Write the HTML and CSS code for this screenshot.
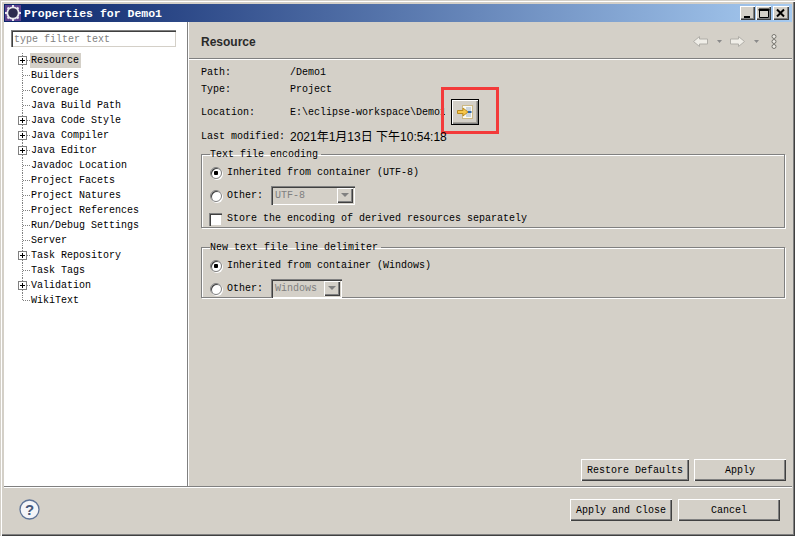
FILE: index.html
```html
<!DOCTYPE html>
<html lang="en">
<head>
<meta charset="utf-8">
<title>Properties for Demo1</title>
<link rel="stylesheet" href="styles.css">
</head>
<body>
<div class="window">
  <header class="titlebar">
    <svg class="app-icon" width="16" height="16" viewBox="0 0 16 16"><rect width="16" height="16" fill="#5b3f8c"/><circle cx="8" cy="8" r="6.6" fill="#e8e8ee"/><g stroke="#e8e8ee" stroke-width="2"><path d="M8 0v16M0 8h16M2.5 2.5l11 11M13.5 2.5l-11 11"/></g><circle cx="8" cy="8" r="4.8" fill="#2c2a4e"/></svg>
    <span class="title-text">Properties for Demo1</span>
    <div class="win-buttons">
      <button class="win-btn"><svg width="14" height="11" viewBox="0 0 14 11"><rect x="3" y="8" width="6" height="2" fill="#000"/></svg></button>
      <button class="win-btn win-btn-max"><svg width="14" height="11" viewBox="0 0 14 11"><path d="M2.5 1.5h9v8h-9z M2 1h10v1.5H2z" fill="none" stroke="#000"/></svg></button>
      <button class="win-btn win-btn-close"><svg width="14" height="11" viewBox="0 0 14 11"><path d="M3 1.5l7 7M10 1.5l-7 7" stroke="#000" stroke-width="2" fill="none"/></svg></button>
    </div>
  </header>

  <div class="main">
    <aside class="sidebar">
      <input class="filter" type="text" placeholder="type filter text">
      <ul class="tree">
        <li class="node"><i class="plus"></i><span class="label selected">Resource</span></li>
        <li class="node"><span class="label">Builders</span></li>
        <li class="node"><span class="label">Coverage</span></li>
        <li class="node"><span class="label">Java Build Path</span></li>
        <li class="node"><i class="plus"></i><span class="label">Java Code Style</span></li>
        <li class="node"><i class="plus"></i><span class="label">Java Compiler</span></li>
        <li class="node"><i class="plus"></i><span class="label">Java Editor</span></li>
        <li class="node"><span class="label">Javadoc Location</span></li>
        <li class="node"><span class="label">Project Facets</span></li>
        <li class="node"><span class="label">Project Natures</span></li>
        <li class="node"><span class="label">Project References</span></li>
        <li class="node"><span class="label">Run/Debug Settings</span></li>
        <li class="node"><span class="label">Server</span></li>
        <li class="node"><i class="plus"></i><span class="label">Task Repository</span></li>
        <li class="node"><span class="label">Task Tags</span></li>
        <li class="node"><i class="plus"></i><span class="label">Validation</span></li>
        <li class="node last"><span class="label">WikiText</span></li>
      </ul>
    </aside>

    <section class="content">
      <div class="page-head">
        <h1 class="page-title">Resource</h1>
        <div class="nav-tools">
          <svg class="nav-arrow" width="15" height="11" viewBox="0 0 15 11"><path d="M.5 5.500L6.500.5V3h8v5h-8v2.500z" fill="#f0eee8" stroke="#b0aea8"/></svg>
          <svg class="nav-drop" width="5" height="3" viewBox="0 0 5 3"><path d="M0 0h5L2.5 3z" fill="#8a8a8a"/></svg>
          <svg class="nav-arrow" width="15" height="11" viewBox="0 0 15 11"><path d="M14.500 5.500L8.500.5V3h-8v5h8v2.500z" fill="#f0eee8" stroke="#b0aea8"/></svg>
          <svg class="nav-drop" width="5" height="3" viewBox="0 0 5 3"><path d="M0 0h5L2.5 3z" fill="#8a8a8a"/></svg>
          <svg class="nav-more" width="6" height="15" viewBox="0 0 6 15"><g fill="#eeece6" stroke="#77756f"><circle cx="3" cy="2.5" r="2"/><circle cx="3" cy="7.5" r="2"/><circle cx="3" cy="12.5" r="2"/></g></svg>
        </div>
      </div>
      <div class="page-body">
        <div class="info-row info-path"><span class="info-key">Path:</span><span>/Demo1</span></div>
        <div class="info-row info-type"><span class="info-key">Type:</span><span>Project</span></div>
        <div class="info-row info-location">
          <span class="info-key">Location:</span>
          <span class="location-path">E:\eclipse-workspace\Demo1</span>
          <button class="reveal">
            <svg width="16" height="16" viewBox="0 0 16 16"><rect x="5.5" y="1.5" width="10" height="13" fill="#fafaf4" stroke="#cdb985"/><path d="M9 4h5M9 6h5M9 10h5M9 12h5" stroke="#9ab0c8"/><rect x="11" y="7" width="3.500" height="2" fill="#2f66a8"/><path d="M.5 6.500h5.500V4l5 4-5 4V9.500H.5z" fill="#f6c64a" stroke="#b98a1e"/></svg>
          </button>
          <span class="annotation"></span>
        </div>
        <div class="info-row info-modified"><span class="info-key">Last modified:</span><span class="date">2021年1月13日 下午10:54:18</span></div>

        <fieldset class="group group-encoding">
          <legend class="group-title">Text file encoding</legend>
          <div class="option option-first"><i class="radio checked"></i><span>Inherited from container (UTF-8)</span></div>
          <div class="option option-other"><i class="radio"></i><span class="other-label">Other:</span><span class="combo combo-wide"><span class="combo-text">UTF-8</span><i class="combo-arrow"></i></span></div>
          <div class="option option-check"><i class="check"></i><span>Store the encoding of derived resources separately</span></div>
        </fieldset>

        <fieldset class="group group-delimiter">
          <legend class="group-title">New text file line delimiter</legend>
          <div class="option option-first"><i class="radio checked"></i><span>Inherited from container (Windows)</span></div>
          <div class="option option-other"><i class="radio"></i><span class="other-label">Other:</span><span class="combo combo-narrow"><span class="combo-text">Windows</span><i class="combo-arrow"></i></span></div>
        </fieldset>
      </div>
      <div class="page-actions">
        <button class="btn btn-restore">Restore Defaults</button>
        <button class="btn btn-apply">Apply</button>
      </div>
    </section>
  </div>

  <footer class="footer">
    <svg class="help" width="21" height="21" viewBox="0 0 21 21"><circle cx="10.500" cy="10.500" r="9.500" fill="#f4f5f8" stroke="#5d7398" stroke-width="1.300"/><text x="10.500" y="15.500" text-anchor="middle" class="help-mark">?</text></svg>
    <div class="footer-actions">
      <button class="btn btn-close">Apply and Close</button>
      <button class="btn btn-cancel">Cancel</button>
    </div>
  </footer>
</div>
</body>
</html>
```
FILE: styles.css
```css
* { box-sizing: border-box; }
html, body { margin: 0; padding: 0; }
body {
  width: 795px;
  height: 536px;
  overflow: hidden;
  background: #d4d0c8;
  font-family: "Liberation Mono", "Noto Sans CJK SC", monospace;
  font-size: 10px;
  color: #000;
}
button { font: inherit; color: inherit; padding: 0; margin: 0; }
ul { list-style: none; margin: 0; padding: 0; }

.window {
  width: 795px;
  height: 536px;
  display: flex;
  flex-direction: column;
  padding: 4px 3px 3px 4px;
  box-shadow: inset 1px 1px 0 #d4d0c8, inset 2px 2px 0 #fff, inset -1px -1px 0 #404040, inset -2px -2px 0 #808080;
}

.titlebar {
  height: 18px;
  flex: none;
  display: flex;
  align-items: center;
  padding: 0 3px 0 1px;
  background: linear-gradient(90deg, #0a246a, #a6caf0);
}
.app-icon { flex: none; margin-right: 3px; }
.title-text { color: #fff; font-weight: bold; font-size: 11.5px; padding-top: 1px; }
.win-buttons { margin-left: auto; display: flex; gap: 1px; }
.win-btn {
  width: 15px;
  height: 14px;
  background: #d4d0c8;
  border: 0;
  box-shadow: inset 1px 1px 0 #fff, inset -1px -1px 0 #404040, inset -2px -2px 0 #808080;
  display: flex;
  align-items: center;
  justify-content: center;
}
.win-btn-close { margin-left: 1px; width: 16px; }

.main { flex: 1; min-height: 0; display: flex; }

.sidebar {
  width: 184px;
  flex: none;
  background: #fff;
  padding: 8px 7px 0;
  border-right: 1px solid #808080;
}
.filter {
  display: block;
  width: 165px;
  height: 17px;
  padding: 2px 0 0 3px;
  border: 0;
  background: #fff;
  font: inherit;
  box-shadow: inset 1px 1px 0 #808080, inset 2px 2px 0 #404040, inset -1px -1px 0 #d4d0c8;
  outline: 0;
}
.filter::placeholder { color: #808080; opacity: 1; }

.tree { margin-top: 6px; margin-left: 11px; }
.node {
  position: relative;
  height: 15px;
  padding-left: 8px;
  display: flex;
  align-items: center;
  line-height: 15px;
  background:
    repeating-linear-gradient(180deg, #808080 0 1px, transparent 1px 2px) 0 0 / 1px 100% no-repeat,
    repeating-linear-gradient(90deg, #808080 0 1px, transparent 1px 2px) 1px 7px / 7px 1px no-repeat;
}
.node.last { background-size: 1px 8px, 7px 1px; }
.label { padding: 0 2px 0 1px; height: 15px; white-space: nowrap; }
.label.selected { background: #d4d0c8; }
.plus {
  position: absolute;
  left: -4px;
  top: 3px;
  width: 9px;
  height: 9px;
  border: 1px solid #808080;
  background:
    linear-gradient(#000, #000) center / 5px 1px no-repeat,
    linear-gradient(#000, #000) center / 1px 5px no-repeat,
    #fff;
}

.content { flex: 1; min-width: 0; display: flex; flex-direction: column; padding-left: 1px; box-shadow: inset 1px 0 0 #fff; }

.page-head {
  height: 37px;
  flex: none;
  display: flex;
  align-items: center;
  justify-content: space-between;
  padding: 3px 15px 0 12px;
  border-bottom: 1px solid #808080;
  box-shadow: 0 1px 0 #fff;
}
.page-title { margin: 0; font: bold 12px "Liberation Sans", sans-serif; color: #2a2a2a; }
.nav-tools { display: flex; align-items: center; }
.nav-drop { margin: 0 8px 0 9px; }
.nav-more { margin-left: 4px; margin-top: -1px; }

.page-body { flex: 1; padding: 0 7px 0 12px; }
.info-row { position: relative; display: flex; align-items: center; line-height: 14px; height: 14px; }
.info-key { width: 89px; flex: none; }
.info-path { margin-top: 7px; }
.info-type { margin-top: 3px; }
.info-location { margin-top: 2px; height: 26px; width: 290px; }
.info-location .info-key, .location-path { padding-top: 2px; }
.location-path { width: 155px; overflow: hidden; white-space: nowrap; }
.reveal {
  margin-left: 6px;
  width: 28px;
  height: 26px;
  flex: none;
  background: #d4d0c8;
  border: 1px solid #000;
  box-shadow: inset 1px 1px 0 #fff, inset -1px -1px 0 #808080, inset -2px -2px 0 #a8a49c;
  display: flex;
  align-items: center;
  justify-content: center;
}
.annotation {
  position: absolute;
  left: 240px;
  top: -12px;
  width: 58px;
  height: 47px;
  border: 3px solid #f33a3a;
  pointer-events: none;
}
.info-modified { margin-top: 5px; }
.date { font-family: "Liberation Sans", "Noto Sans CJK SC", sans-serif; font-size: 12px; }

.group {
  margin: 0;
  padding: 0 0 0 8px;
  min-width: 0;
  border: 1px solid #808080;
  box-shadow: 1px 1px 0 #fff, inset 1px 1px 0 #fff;
}
.group-title { padding: 2px 3px 0 0; margin-left: 0; line-height: 12px; }
.group-encoding { margin-top: 3px; height: 81px; }
.group-delimiter { margin-top: 12px; height: 58px; }

.option { display: flex; align-items: center; height: 14px; line-height: 14px; }
.option-first { margin-top: 5px; }
.option-other { margin-top: 6px; height: 19px; }
.option-check { margin-top: 7px; }
.other-label { width: 44px; flex: none; }
.radio {
  width: 12px;
  height: 12px;
  margin-right: 5px;
  flex: none;
  border-radius: 50%;
  background: #fff;
  border: 1px solid #808080;
  box-shadow: inset 1px 1px 0 #404040, 1px 1px 0 #fff;
}
.radio.checked { background: radial-gradient(circle, #000 0 2px, #fff 2.500px); }
.check {
  width: 13px;
  height: 13px;
  margin: 0 5px 0 -1px;
  flex: none;
  background: #fff;
  box-shadow: inset 1px 1px 0 #808080, inset 2px 2px 0 #404040, inset -1px -1px 0 #d4d0c8;
}
.combo {
  display: flex;
  align-items: center;
  height: 19px;
  background: #d4d0c8;
  color: #808080;
  padding: 2px 2px 2px 3px;
  box-shadow: inset 1px 1px 0 #808080, inset 2px 2px 0 #404040, inset -1px -1px 0 #fff;
}
.combo-wide { width: 84px; }
.combo-narrow { width: 71px; }
.combo-text { flex: 1; padding-left: 1px; }
.combo-arrow {
  width: 16px;
  height: 15px;
  flex: none;
  background: #d4d0c8;
  box-shadow: inset 1px 1px 0 #fff, inset -1px -1px 0 #404040, inset -2px -2px 0 #808080;
  position: relative;
}
.combo-arrow::after {
  content: "";
  position: absolute;
  left: 4px;
  top: 5px;
  border-left: 4px solid transparent;
  border-right: 4px solid transparent;
  border-top: 4px solid #808080;
}

.page-actions { display: flex; justify-content: flex-end; gap: 5px; padding: 0 6px 5px 0; flex: none; }

.btn {
  height: 22px;
  background: #d4d0c8;
  border: 0;
  box-shadow: inset 1px 1px 0 #fff, inset -1px -1px 0 #404040, inset -2px -2px 0 #808080;
  text-align: center;
}
.btn-restore { width: 108px; }
.btn-apply { width: 92px; }
.btn-close { width: 102px; }
.btn-cancel { width: 102px; }

.footer {
  height: 47px;
  flex: none;
  display: flex;
  align-items: center;
  justify-content: space-between;
  padding: 0 12px 0 15px;
  border-top: 1px solid #808080;
  box-shadow: inset 0 1px 0 #fff;
}
.help { margin-bottom: 2px; }
.help-mark { font: bold 15px "Liberation Sans", sans-serif; fill: #45577a; }
.footer-actions { display: flex; gap: 6px; }
```
